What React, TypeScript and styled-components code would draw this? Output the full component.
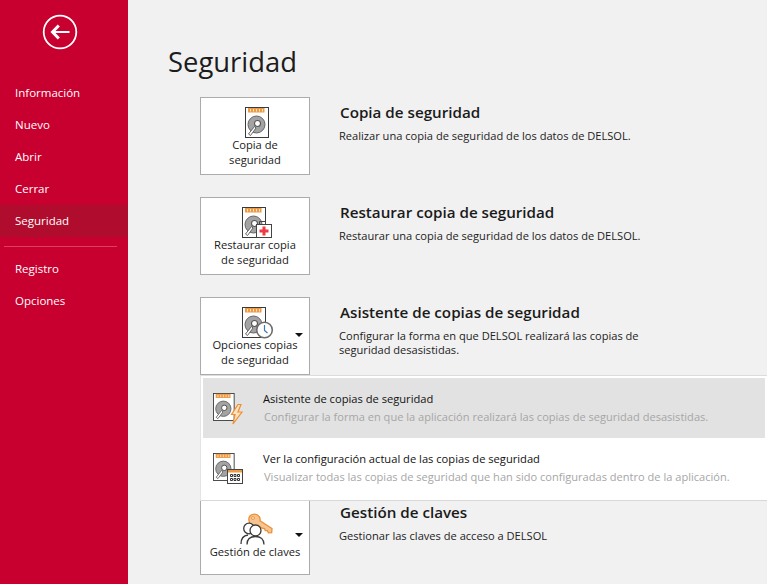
import React from "react";
import styled, { createGlobalStyle } from "styled-components";

const Global = createGlobalStyle`
  html, body { margin: 0; padding: 0; height: 100%; overflow: hidden; }
  #root { height: 100%; }
  * { box-sizing: border-box; }
`;
const Page = styled.div`
  display: flex; width: 767px; height: 584px; overflow: hidden; background: #f1f1f1;
  font-family: "Open Sans", "Noto Sans", sans-serif; color: #1a1a1a;
`;
const Sidebar = styled.nav`
  width: 128px; flex: none; background: #c8002f; color: #fff; padding-top: 14px;
  display: flex; flex-direction: column;
`;
const BackButton = styled.div`
  display: flex; justify-content: center; margin-bottom: 27px; padding-right: 9px; height: 36px;
`;
const NavItem = styled.div<{ $active?: boolean }>`
  height: 32px; line-height: 32px; padding-left: 15px; font-size: 11.5px;
  background: ${(p) => (p.$active ? "#b00c2e" : "transparent")};
`;
const NavDivider = styled.div`
  height: 1px; background: #e23c60; margin: 9px 11px 6px 4px;
`;
const Main = styled.main`
  flex: 1; padding: 0 0 0 40px; min-width: 0;
`;
const Title = styled.h1`
  margin: 0; padding-top: 43px; height: 97px; font-size: 27.4px; line-height: 38px; font-weight: 400; color: #1c1c1c;
`;
const Sections = styled.div`
  display: flex; flex-direction: column; gap: 22px; padding-left: 32px;
`;
const Row = styled.section`
  position: relative; display: flex; height: 78px;
`;
const Tile = styled.div<{ $low?: boolean }>`
  position: relative; width: 110px; height: 78px; flex: none; background: #fff; border: 1px solid #ababab;
  display: flex; flex-direction: column; align-items: center; padding-top: ${(p) => (p.$low ? "15px" : "9px")};
`;
const TileIcon = styled.div<{ $low?: boolean }>`
  height: ${(p) => (p.$low ? "31px" : "30px")}; margin-left: 3px;
  svg { display: block; overflow: visible; }
`;
const TileLabel = styled.div`
  font-size: 11.2px; line-height: 15px; text-align: center; color: #1a1a1a; white-space: nowrap;
`;
const Caret = styled.span`
  position: absolute; right: 6px; top: 35px; width: 0; height: 0;
  border-left: 4px solid transparent; border-right: 4px solid transparent; border-top: 4px solid #111;
`;
const Info = styled.div`
  margin-left: 30px; padding-top: 5px; width: 320px;
`;
const InfoTitle = styled.h2`
  margin: 0; font-size: 15.2px; line-height: 20px; font-weight: 600; color: #1a1a1a; white-space: nowrap;
`;
const InfoText = styled.p`
  margin: 7px 0 0 -1px; font-size: 11.1px; line-height: 14px; color: #222;
`;
const Spacer = styled.div`
  height: 78px;
`;
const Menu = styled.div`
  position: absolute; left: 0; top: 78px; width: 567px; height: 126px; background: #fff;
  border-top: 1px solid #dcdcdc; border-bottom: 1px solid #d8d8d8; border-left: 1px solid #e4e4e4;
  padding: 2px 2px 0 2px; display: flex; flex-direction: column; z-index: 2;
`;
const MenuItem = styled.div<{ $hover?: boolean }>`
  height: 60px; flex: none; display: flex; align-items: flex-start; background: ${(p) => (p.$hover ? "#e2e2e2" : "#fff")};
  padding: 15px 0 0 10px;
`;
const MenuIconSlot = styled.div`
  width: 30px; height: 32px; flex: none;
`;
const MenuText = styled.div`
  margin-left: 20px; margin-top: -2px;
`;
const MenuTitle = styled.div`
  font-size: 11.15px; line-height: 15px; color: #111; white-space: nowrap;
`;
const MenuDesc = styled.div`
  font-size: 11.07px; line-height: 15px; color: #a6a6a6; margin: 3px 0 0 1px; white-space: nowrap;
`;

/* Disk body is 23x30 with its top-left at the svg origin */
const Disk = ({ s = 1 }: { s?: number }) => (
  <g transform={`scale(${s})`}>
    <rect x="0.5" y="0.5" width="23" height="30" fill="#fff" stroke="#3a3a3a" />
    <rect x="3" y="1" width="16.500" height="4.500" fill="#ed9a45" />
    <path d="M5.500 2v2.500M8.500 2v2.500M11.500 2v2.500M14.500 2v2.500M17.500 2v2.500" stroke="#fbe3c5" strokeWidth="1" />
    <circle cx="11.500" cy="17.500" r="8.500" fill="#a3a3a3" stroke="#666" />
    <circle cx="12.500" cy="16.500" r="3" fill="#fff" stroke="#555" strokeWidth="1.100" />
    <path d="M9.500 19.500 L3.500 27 L5.500 28.500 L11 21 Z" fill="#fff" stroke="#555" strokeWidth="0.900" />
  </g>
);
const BackupIcon = () => (
  <svg width="24" height="31" viewBox="0 0 24 31"><Disk /></svg>
);
const RestoreIcon = () => (
  <svg width="30" height="31" viewBox="0 0 30 31">
    <Disk />
    <path d="M17.500 17v-2.500h6V17" fill="none" stroke="#444" />
    <rect x="14.500" y="17.500" width="15" height="13" fill="#fff" stroke="#444" />
    <path d="M20.500 19.500h3V22.500h3v3h-3v3h-3v-3h-3v-3h3z" fill="#ee3a43" />
  </svg>
);
const ClockIcon = () => (
  <svg width="30" height="32" viewBox="0 0 30 32">
    <Disk />
    <circle cx="22.500" cy="23" r="7.800" fill="#fff" stroke="#6d6d6d" strokeWidth="1.600" />
    <path d="M22.500 18v5.500l3 2.500" fill="none" stroke="#3b78b8" strokeWidth="1.200" />
  </svg>
);
const BoltIcon = () => (
  <svg width="30" height="32" viewBox="0 0 30 32">
    <Disk s={0.9} />
    <path d="M25 11.500l-6.500 10h3.500l-2 9.500 9-12h-4l3-7.500z" fill="#fbe1bd" stroke="#ed8f33" strokeWidth="1.200" />
  </svg>
);
const CalendarIcon = () => (
  <svg width="30" height="32" viewBox="0 0 30 32">
    <Disk s={0.9} />
    <rect x="14.500" y="16.500" width="15" height="14" fill="#fff" stroke="#444" />
    <rect x="15" y="17" width="14" height="2.500" fill="#ed9a45" />
    <path d="M17.500 21.500h2v2h-2zM21 21.500h2v2h-2zM24.500 21.500h2v2h-2zM17.500 25.500h2v2h-2zM21 25.500h2v2h-2zM24.500 25.500h2v2h-2z" fill="none" stroke="#333" strokeWidth="1" />
  </svg>
);
const KeysIcon = () => (
  <svg width="33" height="32" viewBox="0 0 33 32">
    <path d="M9.500 3.500c2.500-3.300 7.600-3 9.700.2 1 1.500 1 3 .8 4l12 7.800-.3 4.200-3.200.2-1.200-2.300-2 .1-.8-2.200-2.400-.3-4-2.800c-2 1.400-5 1.200-7-.6C9 9.800 8.200 6 9.500 3.500z" fill="#f6c48e" stroke="#ec8f36" strokeWidth="1.300" />
    <circle cx="13" cy="5" r="1.400" fill="#fff" stroke="#ec8f36" />
    <circle cx="9" cy="15.500" r="5.300" fill="#fff" stroke="#3a3a3a" strokeWidth="1.300" />
    <path d="M1 31c0-5.500 2.500-8.500 7-9" fill="none" stroke="#3a3a3a" strokeWidth="1.300" />
    <circle cx="15.500" cy="17.500" r="5.500" fill="#fff" stroke="#3a3a3a" strokeWidth="1.300" />
    <path d="M7 31.500c0-5.500 3.500-8 8.500-8s8.500 2.500 8.500 8" fill="#fff" stroke="#3a3a3a" strokeWidth="1.300" />
  </svg>
);

export default function App() {
  return (
    <Page>
      <Global />
      <Sidebar>
        <BackButton>
          <svg width="36" height="36" viewBox="0 0 36 36">
            <circle cx="18" cy="18" r="16.300" fill="none" stroke="#fff" strokeWidth="1.800" />
            <path d="M11 18H27.500" stroke="#fff" strokeWidth="2" />
            <path d="M16.800 11.500 10.500 18l6.300 6.500" fill="none" stroke="#fff" strokeWidth="3" />
          </svg>
        </BackButton>
        <NavItem>Información</NavItem>
        <NavItem>Nuevo</NavItem>
        <NavItem>Abrir</NavItem>
        <NavItem>Cerrar</NavItem>
        <NavItem $active>Seguridad</NavItem>
        <NavDivider />
        <NavItem>Registro</NavItem>
        <NavItem>Opciones</NavItem>
      </Sidebar>
      <Main>
        <Title>Seguridad</Title>
        <Sections>
          <Row>
            <Tile><TileIcon><BackupIcon /></TileIcon><TileLabel>Copia de<br />seguridad</TileLabel></Tile>
            <Info>
              <InfoTitle>Copia de seguridad</InfoTitle>
              <InfoText>Realizar una copia de seguridad de los datos de DELSOL.</InfoText>
            </Info>
          </Row>
          <Row>
            <Tile><TileIcon><RestoreIcon /></TileIcon><TileLabel>Restaurar copia<br />de seguridad</TileLabel></Tile>
            <Info>
              <InfoTitle>Restaurar copia de seguridad</InfoTitle>
              <InfoText>Restaurar una copia de seguridad de los datos de DELSOL.</InfoText>
            </Info>
          </Row>
          <Row>
            <Tile><TileIcon><ClockIcon /></TileIcon><TileLabel>Opciones copias<br />de seguridad</TileLabel><Caret /></Tile>
            <Info>
              <InfoTitle>Asistente de copias de seguridad</InfoTitle>
              <InfoText>Configurar la forma en que DELSOL realizará las copias de seguridad desasistidas.</InfoText>
            </Info>
            <Menu>
              <MenuItem $hover>
                <MenuIconSlot><BoltIcon /></MenuIconSlot>
                <MenuText>
                  <MenuTitle>Asistente de copias de seguridad</MenuTitle>
                  <MenuDesc>Configurar la forma en que la aplicación realizará las copias de seguridad desasistidas.</MenuDesc>
                </MenuText>
              </MenuItem>
              <MenuItem>
                <MenuIconSlot><CalendarIcon /></MenuIconSlot>
                <MenuText>
                  <MenuTitle>Ver la configuración actual de las copias de seguridad</MenuTitle>
                  <MenuDesc>Visualizar todas las copias de seguridad que han sido configuradas dentro de la aplicación.</MenuDesc>
                </MenuText>
              </MenuItem>
            </Menu>
          </Row>
          <Spacer />
          <Row>
            <Tile $low><TileIcon $low><KeysIcon /></TileIcon><TileLabel>Gestión de claves</TileLabel><Caret /></Tile>
            <Info>
              <InfoTitle>Gestión de claves</InfoTitle>
              <InfoText>Gestionar las claves de acceso a DELSOL</InfoText>
            </Info>
          </Row>
        </Sections>
      </Main>
    </Page>
  );
}
